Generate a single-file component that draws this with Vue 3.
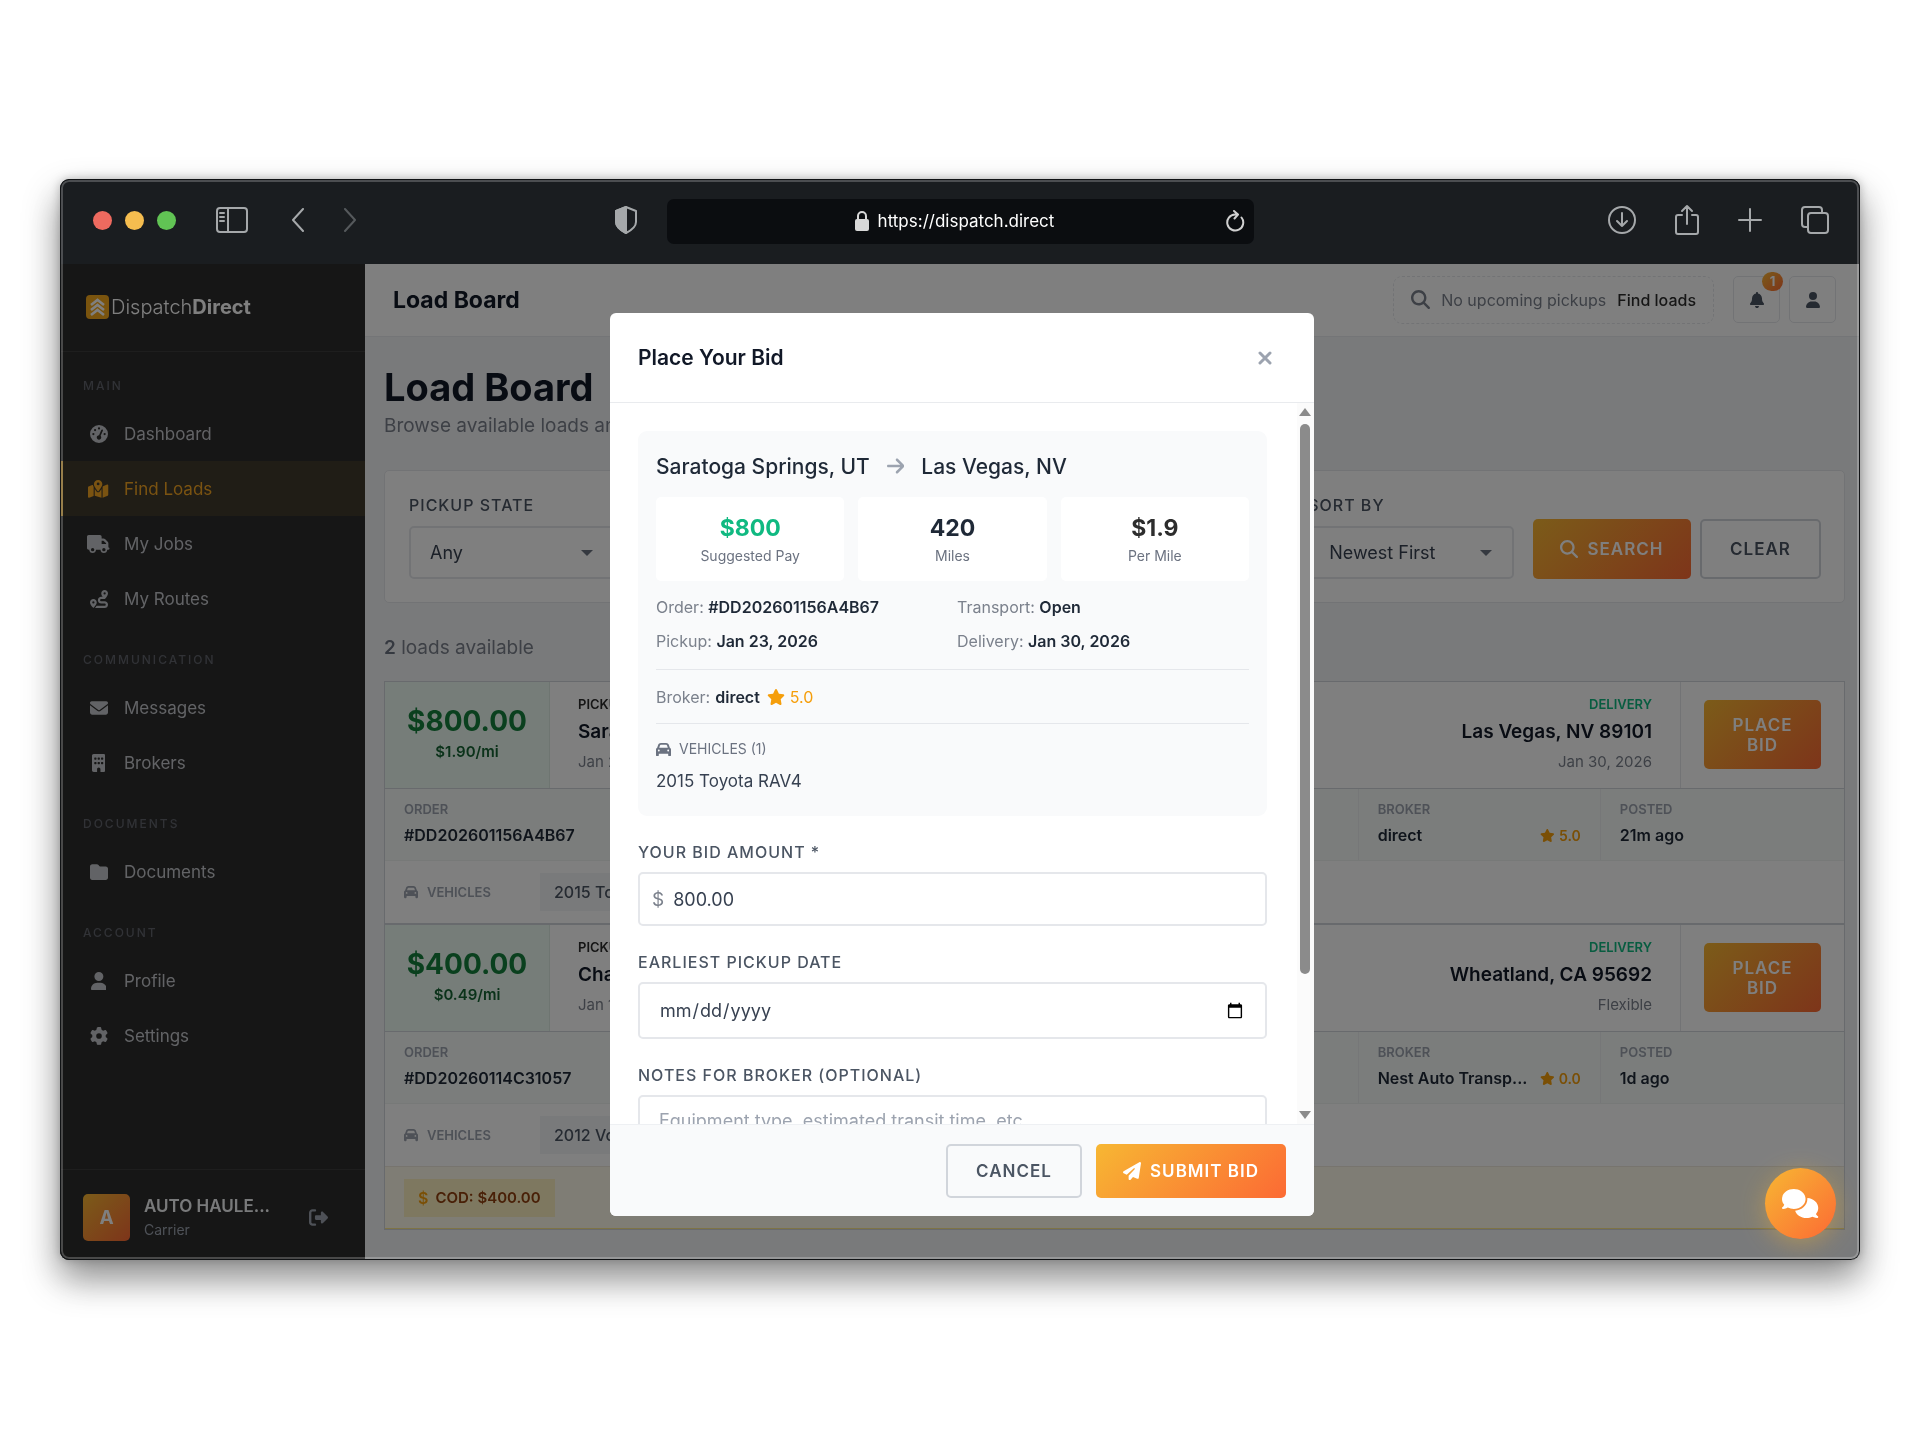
<script setup>
import { h, ref } from 'vue'

// Solid icon set: [viewBox width, path]; every icon is 512 units high.
const icons = {
  gauge: [512, 'M0 256a256 256 0 1 1 512 0A256 256 0 1 1 0 256zM288 96a32 32 0 1 0 -64 0 32 32 0 1 0 64 0zM256 416c35.3 0 64-28.7 64-64c0-17.4-6.9-33.1-18.1-44.6L366 161.7c5.3-12.1-.2-26.3-12.3-31.6s-26.3 .2-31.6 12.3L257.9 288c-.6 0-1.3 0-1.9 0c-35.3 0-64 28.7-64 64s28.7 64 64 64zM176 144a32 32 0 1 0 -64 0 32 32 0 1 0 64 0zM96 288a32 32 0 1 0 0-64 32 32 0 1 0 0 64zm352-32a32 32 0 1 0 -64 0 32 32 0 1 0 64 0z'],
  map: [576, 'M408 120c0 54.6-73.1 151.9-105.2 192c-7.7 9.6-22 9.6-29.6 0C241.1 271.9 168 174.6 168 120C168 53.7 221.7 0 288 0s120 53.7 120 120zm8 80.4c3.5-6.9 6.7-13.8 9.6-20.6c.5-1.2 1-2.5 1.5-3.7l116-46.4C558.9 123.4 576 135 576 152V422.8c0 9.8-6 18.6-15.1 22.3L416 503V200.4zM137.6 138.3c2.4 14.1 7.2 28.3 12.8 41.5c2.9 6.8 6.1 13.7 9.6 20.6V451.8L32.9 502.7C17.1 509 0 497.4 0 480.4V209.6c0-9.8 6-18.6 15.1-22.3l122.6-49zM327.8 332c13.9-17.4 35.7-45.7 56.2-77V504.3L192 449.4V255c20.5 31.3 42.3 59.6 56.2 77c20.5 25.6 59.1 25.6 79.6 0zM288 152a40 40 0 1 0 0-80 40 40 0 1 0 0 80z'],
  truck: [640, 'M48 0C21.5 0 0 21.5 0 48V368c0 26.5 21.5 48 48 48H64c0 53 43 96 96 96s96-43 96-96H384c0 53 43 96 96 96s96-43 96-96h32c17.7 0 32-14.3 32-32s-14.3-32-32-32V288 256 237.3c0-17-6.7-33.3-18.7-45.3L512 114.7c-12-12-28.3-18.7-45.3-18.7H416V48c0-26.5-21.5-48-48-48H48zM416 160h50.7L544 237.3V256H416V160zM112 416a48 48 0 1 1 96 0 48 48 0 1 1 -96 0zm368-48a48 48 0 1 1 0 96 48 48 0 1 1 0-96z'],
  route: [512, 'M512 96c0 50.2-59.1 125.1-84.6 155c-3.8 4.4-9.4 6.1-14.5 5H320c-17.7 0-32 14.3-32 32s14.3 32 32 32h96c53 0 96 43 96 96s-43 96-96 96H139.6c8.7-9.9 19.3-22.6 30-36.8c6.3-8.4 12.8-17.6 19-27.2H416c17.7 0 32-14.3 32-32s-14.3-32-32-32H320c-53 0-96-43-96-96s43-96 96-96h39.8c-21-31.5-39.8-67.7-39.8-96c0-53 43-96 96-96s96 43 96 96zM117.1 489.1c-3.8 4.3-7.2 8.1-10.1 11.3l-1.8 2-.2-.2c-6 4.6-14.6 4-20-1.8C59.8 473 0 402.5 0 352c0-53 43-96 96-96s96 43 96 96c0 30-21.1 67-43.5 97.9c-10.7 14.7-21.7 28-30.8 38.5l-.6 .7zM128 352a32 32 0 1 0 -64 0 32 32 0 1 0 64 0zM416 128a32 32 0 1 0 0-64 32 32 0 1 0 0 64z'],
  envelope: [512, 'M48 64C21.5 64 0 85.5 0 112c0 15.1 7.1 29.3 19.2 38.4L236.8 313.6c11.4 8.5 27 8.5 38.4 0L492.8 150.4c12.1-9.1 19.2-23.3 19.2-38.4c0-26.5-21.5-48-48-48H48zM0 176V384c0 35.3 28.7 64 64 64H448c35.3 0 64-28.7 64-64V176L294.4 339.2c-22.8 17.1-54 17.1-76.8 0L0 176z'],
  building: [384, 'M48 0C21.5 0 0 21.5 0 48V464c0 26.5 21.5 48 48 48h96V432c0-26.5 21.5-48 48-48s48 21.5 48 48v80h96c26.5 0 48-21.5 48-48V48c0-26.5-21.5-48-48-48H48zM64 240c0-8.8 7.2-16 16-16h32c8.8 0 16 7.2 16 16v32c0 8.8-7.2 16-16 16H80c-8.8 0-16-7.2-16-16V240zm112-16h32c8.8 0 16 7.2 16 16v32c0 8.8-7.2 16-16 16H176c-8.8 0-16-7.2-16-16V240c0-8.8 7.2-16 16-16zm80 16c0-8.8 7.2-16 16-16h32c8.8 0 16 7.2 16 16v32c0 8.8-7.2 16-16 16H272c-8.8 0-16-7.2-16-16V240zM80 96h32c8.8 0 16 7.2 16 16v32c0 8.8-7.2 16-16 16H80c-8.8 0-16-7.2-16-16V112c0-8.8 7.2-16 16-16zm80 16c0-8.8 7.2-16 16-16h32c8.8 0 16 7.2 16 16v32c0 8.8-7.2 16-16 16H176c-8.8 0-16-7.2-16-16V112zM272 96h32c8.8 0 16 7.2 16 16v32c0 8.8-7.2 16-16 16H272c-8.8 0-16-7.2-16-16V112c0-8.8 7.2-16 16-16z'],
  folder: [512, 'M64 480H448c35.3 0 64-28.7 64-64V160c0-35.3-28.7-64-64-64H288c-10.1 0-19.6-4.7-25.6-12.8L243.2 57.6C231.1 41.5 212.1 32 192 32H64C28.7 32 0 60.7 0 96V416c0 35.3 28.7 64 64 64z'],
  user: [448, 'M224 256A128 128 0 1 0 224 0a128 128 0 1 0 0 256zm-45.7 48C79.8 304 0 383.8 0 482.3C0 498.7 13.3 512 29.7 512H418.3c16.4 0 29.7-13.3 29.7-29.7C448 383.8 368.2 304 269.7 304H178.3z'],
  gear: [512, 'M495.9 166.6c3.2 8.7 .5 18.4-6.4 24.6l-43.3 39.4c1.1 8.3 1.7 16.8 1.7 25.4s-.6 17.1-1.7 25.4l43.3 39.4c6.9 6.2 9.6 15.9 6.4 24.6c-4.4 11.9-9.7 23.3-15.8 34.3l-4.7 8.1c-6.6 11-14 21.4-22.1 31.2c-5.9 7.2-15.7 9.6-24.5 6.8l-55.7-17.7c-13.4 10.3-28.2 18.9-44 25.4l-12.5 57.1c-2 9.1-9 16.3-18.2 17.8c-13.8 2.3-28 3.5-42.5 3.5s-28.7-1.2-42.5-3.5c-9.2-1.5-16.2-8.7-18.2-17.8l-12.5-57.1c-15.8-6.5-30.6-15.1-44-25.4L83.1 425.9c-8.8 2.8-18.6 .3-24.5-6.8c-8.1-9.8-15.5-20.2-22.1-31.2l-4.7-8.1c-6.1-11-11.4-22.4-15.8-34.3c-3.2-8.7-.5-18.4 6.4-24.6l43.3-39.4C64.6 273.1 64 264.6 64 256s.6-17.1 1.7-25.4L22.4 191.2c-6.9-6.2-9.6-15.9-6.4-24.6c4.4-11.9 9.7-23.3 15.8-34.3l4.7-8.1c6.6-11 14-21.4 22.1-31.2c5.9-7.2 15.7-9.6 24.5-6.8l55.7 17.7c13.4-10.3 28.2-18.9 44-25.4l12.5-57.1c2-9.1 9-16.3 18.2-17.8C227.3 1.2 241.5 0 256 0s28.7 1.2 42.5 3.5c9.2 1.5 16.2 8.7 18.2 17.8l12.5 57.1c15.8 6.5 30.6 15.1 44 25.4l55.7-17.7c8.8-2.8 18.6-.3 24.5 6.8c8.1 9.8 15.5 20.2 22.1 31.2l4.7 8.1c6.1 11 11.4 22.4 15.8 34.3zM256 336a80 80 0 1 0 0-160 80 80 0 1 0 0 160z'],
  logout: [512, 'M377.9 105.9L500.7 228.7c7.2 7.2 11.3 17.1 11.3 27.3s-4.1 20.1-11.3 27.3L377.9 406.1c-6.4 6.4-15 9.9-24 9.9c-18.7 0-33.9-15.2-33.9-33.9l0-62.1-128 0c-17.7 0-32-14.3-32-32l0-64c0-17.7 14.3-32 32-32l128 0 0-62.1c0-18.7 15.2-33.9 33.9-33.9c9 0 17.6 3.6 24 9.9zM160 96L96 96c-17.7 0-32 14.3-32 32l0 256c0 17.7 14.3 32 32 32l64 0c17.7 0 32 14.3 32 32s-14.3 32-32 32l-64 0c-53 0-96-43-96-96L0 128C0 75 43 32 96 32l64 0c17.7 0 32 14.3 32 32s-14.3 32-32 32z'],
  search: [512, 'M416 208c0 45.9-14.9 88.3-40 122.7L502.6 457.4c12.5 12.5 12.5 32.8 0 45.3s-32.8 12.5-45.3 0L330.7 376c-34.4 25.2-76.8 40-122.7 40C93.1 416 0 322.9 0 208S93.1 0 208 0S416 93.1 416 208zM208 352a144 144 0 1 0 0-288 144 144 0 1 0 0 288z'],
  bell: [448, 'M224 0c-17.7 0-32 14.3-32 32V51.2C119 66 64 130.6 64 208v18.8c0 47-17.3 92.4-48.5 127.6l-7.4 8.3c-8.4 9.4-10.4 22.9-5.3 34.4S19.4 416 32 416H416c12.6 0 24-7.4 29.2-18.9s3.1-25-5.3-34.4l-7.4-8.3C401.3 319.2 384 273.9 384 226.8V208c0-77.4-55-142-128-156.8V32c0-17.7-14.3-32-32-32zm45.3 493.3c12-12 18.7-28.3 18.7-45.3H224 160c0 17 6.7 33.3 18.7 45.3s28.3 18.7 45.3 18.7s33.3-6.7 45.3-18.7z'],
  star: [576, 'M316.9 18C311.6 7 300.4 0 288.1 0s-23.4 7-28.8 18L195 150.3 51.4 171.5c-12 1.8-22 10.2-25.7 21.7s-.7 24.2 7.9 32.7L137.8 329 113.2 474.7c-2 12 3 24.2 12.9 31.3s23 8 33.8 2.3l128.3-68.5 128.3 68.5c10.8 5.7 23.9 4.9 33.8-2.3s14.9-19.3 12.9-31.3L438.5 329 542.7 225.9c8.6-8.5 11.7-21.2 7.9-32.7s-13.7-19.9-25.7-21.7L381.2 150.3 316.9 18z'],
  car: [512, 'M135.2 117.4L109.1 192H402.9l-26.1-74.6C372.3 104.6 360.2 96 346.6 96H165.4c-13.6 0-25.7 8.6-30.2 21.4zM39.6 196.8L74.8 96.3C88.3 57.8 124.6 32 165.4 32H346.6c40.8 0 77.1 25.8 90.6 64.3l35.2 100.5c23.2 9.6 39.6 32.5 39.6 59.2V400v48c0 17.7-14.3 32-32 32H448c-17.7 0-32-14.3-32-32V400H96v48c0 17.7-14.3 32-32 32H32c-17.7 0-32-14.3-32-32V400 256c0-26.7 16.4-49.6 39.6-59.2zM128 288a32 32 0 1 0 -64 0 32 32 0 1 0 64 0zm288 32a32 32 0 1 0 0-64 32 32 0 1 0 0 64z'],
  plane: [512, 'M498.1 5.6c10.1 7 15.4 19.1 13.5 31.2l-64 416c-1.5 9.7-7.4 18.2-16 23s-18.9 5.4-28 1.6L284 427.7l-68.5 74.1c-8.9 9.7-22.9 12.9-35.2 8.1S160 493.2 160 480V396.4c0-4 1.5-7.8 4.2-10.7L331.8 202.8c5.8-6.3 5.6-16-.4-22s-15.7-6.4-22-.7L106 360.8 17.7 316.6C7.1 311.3 .3 300.7 0 288.9s5.9-22.8 16.1-28.7l448-256c10.7-6.1 23.9-5.5 34 1.4z'],
  arrow: [448, 'M438.6 278.6c12.5-12.5 12.5-32.8 0-45.3l-160-160c-12.5-12.5-32.8-12.5-45.3 0s-12.5 32.8 0 45.3L338.8 224 32 224c-17.7 0-32 14.3-32 32s14.3 32 32 32l306.7 0L233.4 393.4c-12.5 12.5-12.5 32.8 0 45.3s32.8 12.5 45.3 0l160-160z'],
  comments: [640, 'M208 352c114.9 0 208-78.8 208-176S322.9 0 208 0S0 78.8 0 176c0 38.6 14.7 74.3 39.6 103.4c-3.5 9.4-8.7 17.7-14.2 24.7c-4.8 6.2-9.7 11-13.3 14.3c-1.8 1.6-3.3 2.9-4.3 3.7c-.5 .4-.9 .7-1.1 .8l-.2 .2C1 327.2-1.4 334.4 .8 340.9S9.1 352 16 352c21.8 0 43.8-5.6 62.1-12.5c9.2-3.5 17.8-7.4 25.2-11.4C134.1 343.3 169.8 352 208 352zM448 176c0 112.3-99.1 196.9-216.5 207C255.8 457.4 336.4 512 432 512c38.2 0 73.9-8.7 104.7-23.9c7.5 4 16 7.9 25.2 11.4c18.3 6.9 40.3 12.5 62.1 12.5c6.9 0 13.1-4.5 15.2-11.1c2.1-6.6-.2-13.8-5.8-17.9l-.2-.2c-.2-.2-.6-.4-1.1-.8c-1-.8-2.5-2-4.3-3.7c-3.6-3.3-8.5-8.1-13.3-14.3c-5.5-7-10.7-15.4-14.2-24.7c24.9-29 39.6-64.7 39.6-103.4c0-92.8-84.9-168.9-192.6-175.5c.4 5.1 .6 10.3 .6 15.5z'],
}

const FaIcon = (props) => {
  const [w, d] = icons[props.name]
  return h('svg', { class: 'fa', viewBox: `0 0 ${w} 512`, 'aria-hidden': 'true' }, [h('path', { d })])
}
FaIcon.props = ['name']

const groups = [
  { label: 'Main', items: [['gauge', 'Dashboard'], ['map', 'Find Loads', true], ['truck', 'My Jobs'], ['route', 'My Routes']] },
  { label: 'Communication', items: [['envelope', 'Messages'], ['building', 'Brokers']] },
  { label: 'Documents', items: [['folder', 'Documents']] },
  { label: 'Account', items: [['user', 'Profile'], ['gear', 'Settings']] },
]

const loads = [
  { pay: '$800.00', rate: '$1.90/mi', from: 'Saratoga', fromDate: 'Jan 23', to: 'Las Vegas, NV 89101', toDate: 'Jan 30, 2026', order: '#DD202601156A4B67', broker: 'direct', rating: '5.0', posted: '21m ago', vehicle: '2015 Toyota' },
  { pay: '$400.00', rate: '$0.49/mi', from: 'Cha', fromDate: 'Jan 1', to: 'Wheatland, CA 95692', toDate: 'Flexible', order: '#DD20260114C31057', broker: 'Nest Auto Transp...', rating: '0.0', posted: '1d ago', vehicle: '2012 Vo', cod: 'COD: $400.00' },
]

const stats = [
  { value: '$800', label: 'Suggested Pay', tone: 'green' },
  { value: '420', label: 'Miles', tone: 'navy' },
  { value: '$1.9', label: 'Per Mile', tone: 'dark' },
]

const facts = [
  ['Order:', '#DD202601156A4B67'],
  ['Transport:', 'Open'],
  ['Pickup:', 'Jan 23, 2026'],
  ['Delivery:', 'Jan 30, 2026'],
]

const bid = ref('800.00')
const pickupDate = ref('')
const notes = ref('')
</script>

<template>
  <div class="stage">
    <div class="window">
      <header class="chrome">
        <div class="chrome-left">
          <div class="lights"><i class="red"></i><i class="amber"></i><i class="lime"></i></div>
          <button class="tool panel" aria-label="Toggle sidebar">
            <svg width="32" height="26" viewBox="0 0 32 26"><rect x="1" y="1" width="30" height="24" rx="3" /><path d="M12 1v24M4 6h4M4 10h4M4 14h4" /></svg>
          </button>
          <button class="tool back" aria-label="Back"><svg width="14" height="24" viewBox="0 0 14 24"><path d="M12 1 2 12l10 11" /></svg></button>
          <button class="tool forward" aria-label="Forward"><svg width="14" height="24" viewBox="0 0 14 24"><path d="M2 1l10 11L2 23" /></svg></button>
          <button class="tool shield" aria-label="Privacy">
            <svg width="24" height="28" viewBox="0 0 24 28"><path d="M12 1 22 5v11c0 5-4 8-10 11C6 24 2 21 2 16V5z" /><path class="solid" d="M12 1 2 5v11c0 5 4 8 10 11z" /></svg>
          </button>
        </div>
        <div class="address">
          <svg class="lock" width="14" height="20" viewBox="0 0 14 20"><rect x="0" y="8" width="14" height="12" rx="2" /><path d="M3 9V5a4 4 0 0 1 8 0V9" /></svg>
          <span>https://dispatch.direct</span>
          <button class="tool reload" aria-label="Reload"><svg width="20" height="22" viewBox="0 0 20 22"><path d="M16.5 7.500A8 8 0 1 1 10 4.500h2.500M9 1l4 3.500L9.500 8.500" /></svg></button>
        </div>
        <div class="chrome-right">
          <button class="tool" aria-label="Downloads"><svg width="28" height="28" viewBox="0 0 28 28"><circle cx="14" cy="14" r="13" /><path d="M14 7v13M9 15l5 5 5-5" /></svg></button>
          <button class="tool" aria-label="Share"><svg width="26" height="32" viewBox="0 0 26 32"><path d="M8 11H4a2 2 0 0 0-2 2v15a2 2 0 0 0 2 2h18a2 2 0 0 0 2-2V13a2 2 0 0 0-2-2h-4M13 20V2M8 7l5-5 5 5" /></svg></button>
          <button class="tool" aria-label="New tab"><svg width="24" height="24" viewBox="0 0 24 24"><path d="M12 1v22M1 12h22" /></svg></button>
          <button class="tool" aria-label="Tabs"><svg width="30" height="30" viewBox="0 0 30 30"><rect x="8" y="8" width="20" height="20" rx="3" /><path d="M8 22H5a3 3 0 0 1-3-3V5a3 3 0 0 1 3-3h14a3 3 0 0 1 3 3v3" /></svg></button>
        </div>
      </header>

      <div class="app">
        <aside class="sidebar">
          <a class="brand" href="#">
            <svg width="23" height="24" viewBox="0 0 23 24">
              <rect width="23" height="24" rx="4" fill="#f5a81c" />
              <path d="M5 10l6.500-5 6.500 5M5 15l6.500-5 6.500 5M5 20l6.500-5 6.500 5" fill="none" stroke="#fff" stroke-width="2.600" />
            </svg>
            <span>Dispatch<b>Direct</b></span>
          </a>
          <nav>
            <section v-for="g in groups" :key="g.label">
              <h6>{{ g.label }}</h6>
              <a v-for="[icon, text, active] in g.items" :key="text" href="#" :class="['nav-item', { active }]">
                <span class="nav-icon"><FaIcon :name="icon" /></span>{{ text }}
              </a>
            </section>
          </nav>
          <div class="account">
            <div class="avatar">A</div>
            <div class="who"><strong>AUTO HAULE...</strong><small>Carrier</small></div>
            <button class="logout" aria-label="Log out"><FaIcon name="logout" /></button>
          </div>
        </aside>

        <main>
          <div class="topbar">
            <h2>Load Board</h2>
            <div class="pickups">
              <FaIcon name="search" /><span>No upcoming pickups</span><a href="#">Find loads</a>
            </div>
            <button class="square" aria-label="Notifications"><FaIcon name="bell" /><span class="badge">1</span></button>
            <button class="square" aria-label="Profile"><FaIcon name="user" /></button>
          </div>

          <div class="content">
            <h1>Load Board</h1>
            <p class="lead">Browse available loads and</p>

            <form class="filters" @submit.prevent>
              <div class="fields">
                <div class="field">
                  <label for="pickup-state">Pickup State</label>
                  <select id="pickup-state"><option>Any</option></select>
                </div>
                <div class="field last">
                  <label for="sort-by">Sort By</label>
                  <select id="sort-by"><option>Newest First</option></select>
                </div>
              </div>
              <button class="btn primary search"><FaIcon name="search" />Search</button>
              <button type="button" class="btn outline clear">Clear</button>
            </form>

            <p class="count"><b>2</b> loads available</p>

            <div class="loads">
              <article v-for="l in loads" :key="l.order">
                <div class="summary">
                  <div class="price"><strong>{{ l.pay }}</strong><span>{{ l.rate }}</span></div>
                  <div class="stops">
                    <div class="stop"><em>Pickup</em><strong>{{ l.from }}</strong><span>{{ l.fromDate }}</span></div>
                    <div class="stop to"><em>Delivery</em><strong>{{ l.to }}</strong><span>{{ l.toDate }}</span></div>
                  </div>
                  <div class="action"><button class="btn primary place">Place Bid</button></div>
                </div>
                <div class="details">
                  <div class="cell first"><small>Order</small><b>{{ l.order }}</b></div>
                  <div class="cell broker">
                    <small>Broker</small>
                    <div class="broker-line"><b>{{ l.broker }}</b><span class="rating"><FaIcon name="star" />{{ l.rating }}</span></div>
                  </div>
                  <div class="cell"><small>Posted</small><b>{{ l.posted }}</b></div>
                </div>
                <div class="vehicles">
                  <span class="tag"><FaIcon name="car" />Vehicles</span>
                  <span class="chip">{{ l.vehicle }}</span>
                </div>
                <div v-if="l.cod" class="cod"><span><i>$</i>{{ l.cod }}</span></div>
              </article>
            </div>
          </div>
        </main>

        <div class="overlay">
          <div class="modal" role="dialog" aria-labelledby="bid-title">
            <div class="modal-head">
              <h3 id="bid-title">Place Your Bid</h3>
              <button class="close" aria-label="Close"><svg width="14" height="14" viewBox="0 0 14 14"><path d="M2 2l10 10M12 2 2 12" /></svg></button>
            </div>
            <div class="modal-body">
              <div class="scroll">
                <div class="info">
                  <div class="lane"><span>Saratoga Springs, UT</span><FaIcon name="arrow" /><span>Las Vegas, NV</span></div>
                  <div class="stats">
                    <div v-for="s in stats" :key="s.label" class="stat"><strong :class="s.tone">{{ s.value }}</strong><span>{{ s.label }}</span></div>
                  </div>
                  <div class="facts"><div v-for="[k, v] in facts" :key="k">{{ k }} <b>{{ v }}</b></div></div>
                  <div class="line">Broker: <b>direct</b><span class="score"><FaIcon name="star" />5.0</span></div>
                  <div class="cars">
                    <div class="cars-title"><FaIcon name="car" />Vehicles (1)</div>
                    <div class="car">2015 Toyota RAV4</div>
                  </div>
                </div>
                <div class="entry">
                  <label for="bid">Your Bid Amount *</label>
                  <div class="money"><span>$</span><input id="bid" v-model="bid" type="text" inputmode="decimal" /></div>
                </div>
                <div class="entry">
                  <label for="date">Earliest Pickup Date</label>
                  <input id="date" v-model="pickupDate" type="date" class="date" />
                </div>
                <div class="entry">
                  <label for="notes">Notes for Broker (Optional)</label>
                  <textarea id="notes" v-model="notes" rows="3" placeholder="Equipment type, estimated transit time, etc."></textarea>
                </div>
              </div>
              <div class="scrollbar" aria-hidden="true"><i class="up"></i><i class="thumb"></i><i class="down"></i></div>
            </div>
            <div class="modal-foot">
              <button class="btn outline cancel">Cancel</button>
              <button class="btn primary submit"><FaIcon name="plane" />Submit Bid</button>
            </div>
          </div>
        </div>

        <button class="chat" aria-label="Chat"><FaIcon name="comments" /></button>
      </div>
    </div>
  </div>
</template>

<style>
body { background: #fff; }
svg.fa { height: 1em; width: auto; fill: currentColor; flex: none; display: block; }
</style>

<style scoped>
* { box-sizing: border-box; }
.stage { padding: 179px 60px; font-family: Inter, "Liberation Sans", sans-serif; color: #1f2937; filter: drop-shadow(0 18px 18px rgba(0, 0, 0, 0.4)) drop-shadow(0 0 5px rgba(0, 0, 0, 0.25)); }
.window { position: relative; border-radius: 9px; overflow: hidden; background: #1a1d20; }
.window::after { content: ""; position: absolute; inset: 0; border: 1px solid #111315; border-radius: 9px; box-shadow: inset 0 0 0 2px rgba(255, 255, 255, 0.22); pointer-events: none; z-index: 5; }
button { font: inherit; border: 0; background: none; padding: 0; color: inherit; }
h1, h2, h3, h6, p { margin: 0; }
a { text-decoration: none; color: inherit; }
small, em, i { font-style: normal; }

/* browser toolbar */
.chrome { height: 85px; padding-bottom: 1px; display: grid; grid-template-columns: 1fr minmax(300px, 587px) 1fr; align-items: center; color: #a5a8aa; }
.tool { display: flex; }
.tool svg { fill: none; stroke: currentColor; stroke-width: 2; stroke-linecap: round; stroke-linejoin: round; }
.tool .solid { fill: currentColor; }
.chrome-left { display: flex; align-items: center; padding: 0 29px 2px 33px; }
.lights { display: flex; gap: 13px; }
.lights i { width: 19px; height: 19px; border-radius: 50%; }
.red { background: #ee6a5f; }
.amber { background: #f5bd4f; }
.lime { background: #61c454; }
.panel { margin-left: 40px; }
.back { margin-left: 43px; }
.forward { margin-left: 38px; color: #55595c; }
.shield { margin-left: auto; }
.address { position: relative; height: 45px; padding-right: 11px; border-radius: 7px; background: #0b0d10; display: flex; align-items: center; justify-content: center; gap: 9px; color: #fff; font-size: 17px; }
.lock { fill: #d8d8d8; }
.lock path { fill: none; stroke: #d8d8d8; stroke-width: 2; }
.reload { position: absolute; right: 9px; color: #d0d0d0; }
.chrome-right { display: flex; align-items: center; justify-content: flex-end; gap: 38px; padding: 0 30px 2px 0; }

/* shell */
.app { position: relative; display: flex; }
.sidebar { width: 305px; flex: none; background: #2d2d2d; color: #c5c7cc; display: flex; flex-direction: column; }
.brand { height: 88px; display: flex; align-items: center; gap: 2px; padding: 0 0 2px 26px; border-bottom: 1px solid #3d3d3d; color: #fff; font-size: 20px; font-weight: 300; }
.brand b { font-weight: 700; }
nav { padding-top: 18px; }
nav section { margin-bottom: 18px; }
h6 { height: 36px; padding: 8px 23px 0; font-size: 12px; line-height: 15px; font-weight: 500; letter-spacing: 2px; text-transform: uppercase; color: #62656d; }
.nav-item { height: 55px; display: flex; align-items: center; gap: 14px; padding-left: 24px; font-size: 17px; border-left: 3px solid transparent; }
.nav-icon { width: 23px; display: flex; justify-content: center; font-size: 18px; }
.nav-item.active { color: #f5a623; background: #413a2c; border-left-color: #f7b733; }
.account { margin-top: auto; height: 91px; padding: 4px 37px 0 23px; border-top: 1px solid #3d3d3d; display: flex; align-items: center; gap: 14px; }
.avatar { width: 47px; height: 47px; border-radius: 5px; background: linear-gradient(135deg, #f7b733, #fc6a34); display: flex; align-items: center; justify-content: center; color: #fff; font-weight: 700; font-size: 19px; }
.who { display: flex; flex-direction: column; gap: 4px; }
.who strong { font-size: 17px; line-height: 21px; font-weight: 600; color: #f3f4f6; white-space: nowrap; }
.who small { font-size: 14px; line-height: 18px; color: #9ca3af; }
.logout { margin-left: auto; font-size: 19px; color: #9ca3af; }

main { flex: 1; min-width: 0; background: #f3f4f6; }
.topbar { height: 73px; background: #fff; border-bottom: 1px solid #e8eaee; display: flex; align-items: center; padding: 0 24px 1px 28px; }
h2 { flex: 1; font-size: 23px; font-weight: 700; color: #111827; }
.pickups { height: 48px; display: flex; align-items: center; gap: 11px; padding: 0 17px; border: 1px dashed #e5e7eb; border-radius: 9px; font-size: 16px; color: #7b818c; margin-right: 19px; }
.pickups svg { font-size: 19px; }
.pickups a { color: #2d2d2d; font-weight: 500; }
.square { position: relative; width: 47px; height: 47px; border: 1px solid #e5e7eb; border-radius: 5px; display: flex; align-items: center; justify-content: center; font-size: 16px; color: #4b5563; }
.square + .square { margin-left: 9px; }
.badge { position: absolute; top: -5px; right: -4px; width: 21px; height: 19px; border-radius: 10px; background: linear-gradient(135deg, #f7b733, #fc6a34); color: #fff; font-size: 13px; font-weight: 700; line-height: 19px; text-align: center; }

.content { padding: 27px 15px 30px 19px; }
h1 { font-size: 38px; line-height: 46px; font-weight: 700; color: #111827; }
.lead { margin-top: 2px; font-size: 19px; line-height: 28px; color: #7b818c; }
.filters { margin-top: 30px; padding: 24px 23px 23px 24px; background: #fff; border: 1px solid #e5e7eb; border-radius: 5px; display: flex; align-items: flex-end; }
.fields { flex: 1; display: grid; grid-template-columns: repeat(5, 1fr); gap: 19px; margin-right: 19px; }
.field.last { grid-column: 5; }
.field label, .entry label { display: block; font-size: 16px; line-height: 20px; font-weight: 500; letter-spacing: 1px; text-transform: uppercase; color: #4b5563; white-space: nowrap; }
.field label { margin-bottom: 11px; }
select { appearance: none; display: block; width: 100%; height: 53px; padding: 0 19px; border: 2px solid #e5e7eb; border-radius: 5px; font: 400 18px Inter, sans-serif; color: #374151; background: #fff url("data:image/svg+xml,%3Csvg xmlns='http://www.w3.org/2000/svg' viewBox='0 0 12 6'%3E%3Cpath d='M0 0h12L6 6z' fill='%236b7280'/%3E%3C/svg%3E") no-repeat right 20px center / 12px 6px; }
.btn { display: flex; align-items: center; justify-content: center; gap: 9px; border-radius: 5px; font-size: 17px; font-weight: 600; letter-spacing: 1px; text-transform: uppercase; }
.primary { background: linear-gradient(135deg, #f7b733, #fc6a34); color: #fff; }
.outline { border: 2px solid #d1d5db; color: #4b5563; }
.search { width: 158px; height: 60px; }
.search svg { font-size: 18px; }
.clear { width: 121px; height: 60px; margin-left: 9px; }
.count { margin: 33px 0 22px; font-size: 19px; line-height: 23px; color: #7b818c; }
.count b { font-weight: 600; color: #6b7280; }

.loads { border: 1px solid #d1d5db; background: #fff; }
article + article { border-top: 2px solid #d1d5db; }
.summary { display: flex; height: 107px; border-bottom: 1px solid #d1d5db; }
.price { width: 165px; background: #ecfbf2; border-right: 1px solid #dcebe2; display: flex; flex-direction: column; align-items: center; justify-content: center; gap: 6px; padding-bottom: 3px; }
.price strong { font-size: 28px; line-height: 30px; font-weight: 700; color: #15803d; }
.price span { font-size: 15px; line-height: 20px; font-weight: 600; color: #166534; }
.stops { flex: 1; display: flex; justify-content: space-between; padding: 15px 28px 0; }
.stop { display: flex; flex-direction: column; }
.stop em { font-size: 13px; line-height: 15px; font-weight: 600; color: #2d2d2d; text-transform: uppercase; }
.stop strong { font-size: 19px; line-height: 24px; margin: 8px 0; font-weight: 600; color: #111827; }
.stop span { font-size: 15px; line-height: 20px; color: #7b818c; }
.to { text-align: right; }
.to em { color: #10b981; }
.action { width: 164px; border-left: 1px solid #e5e7eb; padding: 18px 23px 0; }
.place { width: 117px; height: 69px; line-height: 20px; padding: 0 24px; }
.details { display: grid; grid-template-columns: repeat(6, 1fr); height: 72px; background: #f6faf8; border-bottom: 1px solid #eef2f0; }
.cell { min-width: 0; padding: 13px 19px 0; display: flex; flex-direction: column; gap: 8px; }
.cell small { font-size: 13px; line-height: 15px; font-weight: 600; text-transform: uppercase; color: #9ca3af; }
.cell b { font-size: 16px; line-height: 20px; font-weight: 600; color: #1f2937; white-space: nowrap; }
.broker { grid-column: 5; border-left: 1px solid #eceff0; border-right: 1px solid #eceff0; }
.broker-line { display: flex; justify-content: space-between; gap: 8px; }
.rating { display: flex; align-items: center; gap: 4px; font-size: 14px; font-weight: 600; color: #f59e0b; }
.rating svg { font-size: 13px; }
.vehicles { height: 62px; display: flex; align-items: center; padding: 0 19px; }
.tag { width: 136px; display: flex; align-items: center; gap: 9px; font-size: 13px; font-weight: 600; text-transform: uppercase; color: #9ca3af; }
.tag svg { font-size: 14px; }
.chip { height: 38px; line-height: 38px; padding: 0 14px; background: #f3f4f6; font-size: 16px; font-weight: 500; color: #4b5563; }
.cod { height: 63px; display: flex; align-items: center; padding: 0 19px; background: #fffaeb; border-top: 1px solid #eee9dc; border-bottom: 1px solid #fde68a; }
.cod span { height: 38px; display: flex; align-items: center; gap: 7px; padding: 0 14px; background: #fdf0c0; color: #92400e; font-size: 15px; font-weight: 600; }
.cod i { color: #f59e0b; font-size: 16px; }

/* modal */
.overlay { position: absolute; inset: 0; z-index: 2; background: rgba(0, 0, 0, 0.5); display: flex; justify-content: center; align-items: flex-start; padding: 49px 0 43px 4px; }
.modal { width: 704px; max-width: 90%; border-radius: 6px; overflow: hidden; background: #fff; }
.modal-head { height: 90px; display: flex; align-items: center; justify-content: space-between; padding: 0 42px 0 28px; border-bottom: 1px solid #e9ebee; }
h3 { font-size: 21px; font-weight: 600; color: #111827; }
.close svg { display: block; fill: none; stroke: #9ca3af; stroke-width: 3; stroke-linecap: round; }
.modal-body { display: flex; height: 721px; }
.scroll { flex: 1; padding: 28px 30px 0 28px; overflow: hidden; }
.scrollbar { width: 17px; background: #fbfbfb; display: flex; flex-direction: column; align-items: center; padding: 5px 1px 5px 0; }
.up, .down { border: 6px solid transparent; }
.up { border-top: 0; border-bottom: 8px solid #8b8b8b; }
.down { border-bottom: 0; border-top: 8px solid #8b8b8b; margin-top: auto; }
.thumb { width: 10px; height: 550px; margin-top: 8px; border-radius: 5px; background: #8b8b8b; }
.info { background: #f9fafb; border-radius: 9px; padding: 19px 18px 24px; }
.lane { display: flex; align-items: center; gap: 17px; height: 32px; font-size: 21px; font-weight: 500; }
.lane svg { color: #9ca3af; font-size: 20px; }
.stats { display: grid; grid-template-columns: repeat(3, 1fr); gap: 14px; margin-top: 15px; }
.stat { height: 84px; background: #fff; border-radius: 5px; display: flex; flex-direction: column; align-items: center; justify-content: center; gap: 3px; }
.stat strong { font-size: 23px; line-height: 30px; font-weight: 700; }
.stat span { font-size: 14px; line-height: 20px; color: #6b7280; }
.green { color: #10b981; }
.navy { color: #1f2937; }
.dark { color: #2d2d2d; }
.facts { display: grid; grid-template-columns: 1fr 1fr; gap: 14px 9px; margin-top: 16px; padding-bottom: 18px; }
.facts, .line { font-size: 16px; line-height: 20px; color: #7b818c; }
.facts b, .line b { color: #1f2937; font-weight: 600; }
.line { display: flex; align-items: center; gap: 5px; height: 55px; border: solid #e5e7eb; border-width: 1px 0; }
.score { display: flex; align-items: center; gap: 5px; margin-left: 2px; color: #f59e0b; }
.cars-title { display: flex; align-items: center; gap: 8px; margin-top: 15px; font-size: 14px; line-height: 20px; text-transform: uppercase; color: #6b7280; }
.cars-title svg { font-size: 15px; }
.car { margin-top: 11px; font-size: 17px; line-height: 22px; color: #374151; }
.entry { margin-top: 26px; }
.entry label { margin-bottom: 10px; }
.money, .date, textarea { width: 100%; border: 2px solid #e5e7eb; border-radius: 5px; background: #fff; font: 400 18px Inter, sans-serif; color: #374151; }
.money { height: 54px; display: flex; align-items: center; gap: 9px; padding-left: 12px; }
.money span { color: #7b818c; font-size: 19px; }
.money input { flex: 1; min-width: 0; border: 0; padding: 0; outline: 0; background: none; font: 400 18px Inter, sans-serif; color: #374151; }
.date { display: block; height: 57px; padding: 0 19px; }
textarea { display: block; height: 112px; padding: 13px 19px; resize: none; }
textarea::placeholder { color: #9ca3af; opacity: 1; }
.modal-foot { height: 92px; display: flex; align-items: center; justify-content: flex-end; gap: 14px; padding-right: 28px; background: #f9fafb; border-top: 1px solid #eef0f3; }
.cancel { width: 136px; height: 54px; }
.submit { width: 190px; height: 54px; }
.submit svg { font-size: 18px; }
.chat { position: absolute; right: 24px; bottom: 21px; z-index: 3; width: 71px; height: 71px; border-radius: 50%; background: linear-gradient(135deg, #f7b733, #fc6a34); box-shadow: 0 5px 24px rgba(247, 183, 51, 0.4); display: flex; align-items: center; justify-content: center; color: #fff; font-size: 29px; }
</style>
